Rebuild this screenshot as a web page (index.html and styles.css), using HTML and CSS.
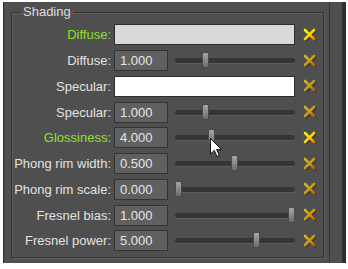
FILE: index.html
```html
<!DOCTYPE html>
<html lang="en">
<head>
<meta charset="UTF-8">
<title>Shading</title>
<link rel="stylesheet" href="styles.css">
</head>
<body>
<div class="shot">
    <div class="window">
        <div class="main">
            <fieldset class="group">
                <legend>Shading</legend>
                <div class="rows">
                    <label class="lbl active">Diffuse:</label>
                    <div class="swatch" style="background:#d9d9d9"></div>
                    <span class="reset"><svg viewBox="0 0 14 14"><use href="#x-on"/></svg></span>

                    <label class="lbl">Diffuse:</label>
                    <div class="num">1.000</div>
                    <div class="slider"><span class="thumb" style="left:27px"></span></div>
                    <span class="reset"><svg viewBox="0 0 14 14"><use href="#x-off"/></svg></span>

                    <label class="lbl">Specular:</label>
                    <div class="swatch" style="background:#ffffff"></div>
                    <span class="reset"><svg viewBox="0 0 14 14"><use href="#x-off"/></svg></span>

                    <label class="lbl">Specular:</label>
                    <div class="num">1.000</div>
                    <div class="slider"><span class="thumb" style="left:27px"></span></div>
                    <span class="reset"><svg viewBox="0 0 14 14"><use href="#x-off"/></svg></span>

                    <label class="lbl active">Glossiness:</label>
                    <div class="num">4.000</div>
                    <div class="slider"><span class="thumb" style="left:33px"></span></div>
                    <span class="reset"><svg viewBox="0 0 14 14"><use href="#x-on"/></svg></span>

                    <label class="lbl">Phong rim width:</label>
                    <div class="num">0.500</div>
                    <div class="slider"><span class="thumb" style="left:56px"></span></div>
                    <span class="reset"><svg viewBox="0 0 14 14"><use href="#x-off"/></svg></span>

                    <label class="lbl">Phong rim scale:</label>
                    <div class="num">0.000</div>
                    <div class="slider"><span class="thumb" style="left:0px"></span></div>
                    <span class="reset"><svg viewBox="0 0 14 14"><use href="#x-off"/></svg></span>

                    <label class="lbl">Fresnel bias:</label>
                    <div class="num">1.000</div>
                    <div class="slider"><span class="thumb" style="left:113px"></span></div>
                    <span class="reset"><svg viewBox="0 0 14 14"><use href="#x-off"/></svg></span>

                    <label class="lbl">Fresnel power:</label>
                    <div class="num">5.000</div>
                    <div class="slider"><span class="thumb" style="left:78px"></span></div>
                    <span class="reset"><svg viewBox="0 0 14 14"><use href="#x-off"/></svg></span>
                </div>
            </fieldset>
        </div>
        <div class="side"></div>
    </div>

    <!-- mouse pointer over the glossiness slider -->
    <svg class="cursor" width="13" height="20" viewBox="0 0 13 20">
        <path d="M0.5 0.5 L0.5 16 L4.3 12.4 L7 18.5 L9.3 17.5 L6.7 11.6 L11.5 11.6 Z" fill="#fff" stroke="#111" stroke-width="1"/>
    </svg>
</div>

<svg width="0" height="0" style="position:absolute">
    <defs>
        <linearGradient id="g-on" x1="0" y1="0" x2="1" y2="1">
            <stop offset="0" stop-color="#fff200"/>
            <stop offset="0.55" stop-color="#ffd000"/>
            <stop offset="1" stop-color="#f07a00"/>
        </linearGradient>
        <linearGradient id="g-off" x1="0" y1="0" x2="1" y2="1">
            <stop offset="0" stop-color="#d2b81c"/>
            <stop offset="0.55" stop-color="#c89a18"/>
            <stop offset="1" stop-color="#b8600e"/>
        </linearGradient>
        <g id="x-on">
            <path d="M3.5 3.5 L12 12 M12 3.5 L3.5 12" stroke="#202020" stroke-width="2.6" stroke-linecap="round" opacity="0.45"/>
            <path d="M2 2 L11 11 M11 2 L2 11" stroke="url(#g-on)" stroke-width="2.6" stroke-linecap="round"/>
        </g>
        <g id="x-off">
            <path d="M3.5 3.5 L12 12 M12 3.5 L3.5 12" stroke="#202020" stroke-width="2.6" stroke-linecap="round" opacity="0.45"/>
            <path d="M2 2 L11 11 M11 2 L2 11" stroke="url(#g-off)" stroke-width="2.6" stroke-linecap="round"/>
        </g>
    </defs>
</svg>
</body>
</html>
```

FILE: styles.css
```css
body {
    margin: 0;
    background: #fff;
    font-family: "Liberation Sans", Arial, sans-serif;
    font-size: 13px;
}
.shot {
    position: relative;
    width: 348px;
    height: 269px;
    overflow: hidden;
}
.window {
    display: flex;
    margin: 2px 0 0 3px;
    width: 340px;
    height: 261px;
    background: #4f4f4f;
    border-left: 1px solid #2f2f2f;
    box-shadow: 3px 0 0 #2e2e2e;
    box-sizing: border-box;
}
.main {
    width: 326px;
    padding: 2px 5px 0 7px;
    box-sizing: border-box;
}
.side {
    width: 12px;
    border-left: 1px solid #333;
    border-right: 1px solid #333;
}
.group {
    margin: 0;
    padding: 0;
    height: 254px;
    box-sizing: border-box;
    border: 1px solid #333;
    box-shadow: inset 1px 1px 0 #5e5e5e, 1px 1px 0 #5e5e5e;
}
.group legend {
    margin-left: 8px;
    padding: 0 3px;
    line-height: 16px;
    color: #dcdcdc;
}
.rows {
    display: grid;
    grid-template-columns: 102px 54px 120px 30px;
    grid-auto-rows: 25.75px;
    padding-top: 2px;
    align-items: center;
}
.lbl {
    color: #e2e2e2;
    text-align: right;
    padding-right: 3px;
    white-space: nowrap;
}
.lbl.active {
    color: #8fe02c;
}
.swatch {
    grid-column: 2 / 4;
    height: 21px;
    border: 1px solid #2e2e2e;
    box-sizing: border-box;
    margin-right: -7px;
}
.num {
    height: 21px;
    line-height: 19px;
    padding-left: 5px;
    color: #e6e6e6;
    background: #606060;
    border: 1px solid #333;
    box-sizing: border-box;
}
.slider {
    position: relative;
    height: 5px;
    margin-left: 7px;
    margin-right: -7px;
    background: #353535;
    border-radius: 3px;
    box-shadow: 0 1px 0 #5d5d5d;
}
.thumb {
    position: absolute;
    top: -6px;
    width: 7px;
    height: 16px;
    box-sizing: border-box;
    border: 1px solid #4a4a4a;
    border-radius: 2px;
    background: linear-gradient(#a8a8a8, #8a8a8a 50%, #6c6c6c);
}
.reset {
    display: block;
    width: 14px;
    height: 14px;
    margin-left: 15px;
}
.reset svg {
    display: block;
    width: 14px;
    height: 14px;
}
.cursor {
    position: absolute;
    left: 210px;
    top: 138px;
}
```
